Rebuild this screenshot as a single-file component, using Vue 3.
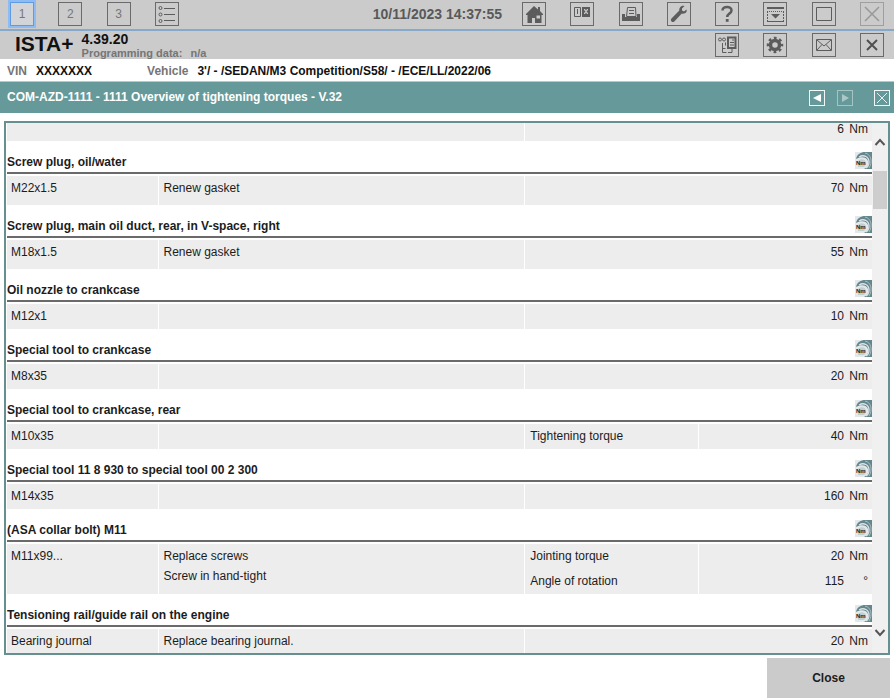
<script setup>
import { ref } from 'vue'

const activeTab = ref(1)

const topTools = ['home', 'book', 'print', 'wrench', 'help', 'dock', 'window', 'close']
const subTools = ['tree', 'gear', 'mail', 'close']
const labels = {
  home: 'Home', book: 'Manuals', print: 'Print', wrench: 'Service', help: 'Help', dock: 'Minimise',
  window: 'Window', close: 'Close', tree: 'Documents', gear: 'Settings', mail: 'Mail'
}

const sections = [
  { title: 'Screw plug, oil/water', size: 'M22x1.5', notes: ['Renew gasket'], tall: true, values: [['', '70', 'Nm']] },
  { title: 'Screw plug, main oil duct, rear, in V-space, right', size: 'M18x1.5', notes: ['Renew gasket'], tall: true, values: [['', '55', 'Nm']] },
  { title: 'Oil nozzle to crankcase', size: 'M12x1', notes: [], values: [['', '10', 'Nm']] },
  { title: 'Special tool to crankcase', size: 'M8x35', notes: [], values: [['', '20', 'Nm']] },
  { title: 'Special tool to crankcase, rear', size: 'M10x35', notes: [], values: [['Tightening torque', '40', 'Nm']] },
  { title: 'Special tool 11 8 930 to special tool 00 2 300', size: 'M14x35', notes: [], values: [['', '160', 'Nm']] },
  { title: '(ASA collar bolt) M11', size: 'M11x99...', notes: ['Replace screws', 'Screw in hand-tight'], values: [['Jointing torque', '20', 'Nm'], ['Angle of rotation', '115', '°']] },
  { title: 'Tensioning rail/guide rail on the engine', size: 'Bearing journal', notes: ['Replace bearing journal.'], tall: true, values: [['', '20', 'Nm']] }
]
</script>

<template>
  <div class="app">
    <header class="topbar">
      <nav class="icons four">
        <button v-for="n in 3" :key="n" class="tool num" :class="{ active: n === activeTab }" @click="activeTab = n">{{ n }}</button>
        <button class="tool" aria-label="List">
          <svg viewBox="0 0 22 22" class="line">
            <circle cx="4.5" cy="5" r="1.5" /><circle cx="4.5" cy="11.5" r="1.5" /><circle cx="4.5" cy="18" r="1.5" />
            <path d="M8 5.5h11M8 11.5h11M8 17.5h11" />
          </svg>
        </button>
      </nav>
      <time class="clock">10/11/2023 14:37:55</time>
      <div class="icons eight">
        <button v-for="t in topTools" :key="t" class="tool" :class="{ faded: t === 'close' }" :aria-label="labels[t]">
          <svg viewBox="0 0 22 22">
            <path v-if="t === 'home'" class="fill" fill-rule="evenodd" d="M11 3 3 11v1h1.500v8H9v-5h3v5h6.500v-8H20v-1l-3-3V4h-2v2.500zM13.500 12.500h3.500v3h-3.500z" />
            <g v-else-if="t === 'book'">
              <path class="line" d="M3.500 4.500h6v9h-6zM6.500 6v5" />
              <path class="fill" fill-rule="evenodd" d="M11 4h8v10h-8zM13 6v1l1.500 1.500L13 10v1h1l1-1.500 1 1.500h1v-1l-1.500-1.500L17 7V6h-1l-1 1.500L14 6z" />
            </g>
            <g v-else-if="t === 'print'">
              <path class="fill" d="M2 11h3v3h12v-3h3v7H2z" />
              <path class="line" d="M6.500 13.500 7.500 4.500h8l.500 9zM9 7.500h5M9 10.500h5" />
            </g>
            <path v-else-if="t === 'wrench'" class="fill" d="M18.500 6.500 16 8.500 14 7.500V5.500L16.500 3c-2.500-.8-5.500 1-5.200 4.500L3.500 15.500c-1.800 2 .8 4.700 2.800 3l7.500-8c3 .8 5.700-1.200 4.700-4z" />
            <g v-else-if="t === 'help'">
              <path class="thick" d="M6.500 7.500C6.500 2.800 15.500 2.800 15.500 7.500c0 3-4.300 3.200-4.300 6.500" />
              <path class="fill" d="M9.800 16h2.800v2.800H9.800z" />
            </g>
            <g v-else-if="t === 'dock'">
              <path class="fill" d="M3 4h17v2H3zM7 11h9l-4.500 4.500z" />
              <path class="line" d="M3.500 8v10M19.500 8v10" stroke-dasharray="2 1" />
              <path class="line" d="M3 18.500h17" /><path class="line" d="M3 8.500h17" stroke-dasharray="1 1" />
            </g>
            <path v-else-if="t === 'window'" class="line" d="M3.500 4.500h15v13h-15z" />
            <path v-else class="line x" d="m4 4 14 14M18 4 4 18" />
          </svg>
        </button>
      </div>
    </header>

    <section class="product">
      <h1>ISTA+</h1>
      <div class="version">
        <strong>4.39.20</strong>
        <p><span>Programming data:</span><span>n/a</span></p>
      </div>
      <div class="icons four">
        <button v-for="t in subTools" :key="t" class="tool" :aria-label="labels[t]">
          <svg viewBox="0 0 22 22">
            <g v-if="t === 'tree'">
              <path class="page" d="M12 3.500h7.500v10.500H12z" />
              <path class="line" d="M14 8.500h4M14 11h4M16 6h2M6.500 9v9.500h4M6.500 14.500h3M9.500 8.500v3M12 18.500h4V15" />
              <circle class="line" cx="4" cy="5.500" r="1.500" /><circle class="line" cx="8" cy="5.500" r="1.500" />
            </g>
            <g v-else-if="t === 'gear'">
              <circle cx="11" cy="11" r="4.500" fill="none" stroke="#5c5c5c" stroke-width="3.500" />
              <circle cx="11" cy="11" r="7" fill="none" stroke="#5c5c5c" stroke-width="2.500" stroke-dasharray="2.750 2.750" stroke-dashoffset="1.400" />
            </g>
            <path v-else-if="t === 'mail'" class="line" d="M3.500 5.500h15v11h-15zM4 6l7 6 7-6M4 16l5-5.500M18 16l-5-5.500" />
            <path v-else class="cross" d="m6 6 10 10M16 6 6 16" />
          </svg>
        </button>
      </div>
    </section>

    <section class="vehicle">
      <span class="key">VIN</span><strong class="vin">XXXXXXX</strong>
      <span class="key">Vehicle</span><strong>3'/ - /SEDAN/M3 Competition/S58/ - /ECE/LL/2022/06</strong>
    </section>

    <section class="titlebar">
      <h2>COM-AZD-1111 - 1111 Overview of tightening torques - V.32</h2>
      <button class="mini" aria-label="Back"><svg viewBox="0 0 14 14"><path d="M11 3v8L3 7z" /></svg></button>
      <button class="mini dim" aria-label="Forward"><svg viewBox="0 0 14 14"><path d="M4 3v8l7-4z" /></svg></button>
      <button class="mini last" aria-label="Close document"><svg viewBox="0 0 14 14"><path class="thin" d="m2 2 10 10M12 2 2 12" /></svg></button>
    </section>

    <main class="frame">
      <div class="view">
        <table>
          <colgroup><col class="c1" /><col class="c2" /><col class="c3" /><col /></colgroup>
          <tbody>
            <tr class="first"><td></td><td></td><td class="split" colspan="2"><div class="value"><span>6</span><span class="unit">Nm</span></div></td></tr>
          </tbody>
          <tbody v-for="s in sections" :key="s.title">
            <tr class="head">
              <th colspan="4" scope="rowgroup">
                <div>
                  <span>{{ s.title }}</span>
                  <svg viewBox="0 0 17 17" class="torque">
                    <path d="M0 0h17v17H0z" fill="#e3e9ea" />
                    <path d="M1 7C2 2 6 0 10 0h7v17H9c4-2 5-5 4-8-1-4-7-5-12-2z" fill="#64868d" />
                    <path d="M4 5c5-3 10 0 10 5 0 3-1 5-3 6" fill="none" stroke="#dbe5e7" stroke-width="1.300" />
                    <path d="M10 1c6 1 8 9 4 15" fill="none" stroke="#a9bec2" />
                    <path d="M3 9c3-3 8-2 8 2 0 2-1 3-2 4H3z" fill="#c3d0d3" />
                    <text x="1" y="13">Nm</text>
                  </svg>
                </div>
              </th>
            </tr>
            <tr v-for="(v, i) in s.values" :key="i" :class="{ tall: s.tall, next: i > 0 }">
              <td v-if="i === 0" :rowspan="s.values.length">{{ s.size }}</td>
              <td v-if="i === 0" :rowspan="s.values.length" class="split"><p v-for="n in s.notes" :key="n">{{ n }}</p></td>
              <td v-if="v[0]" class="split">{{ v[0] }}</td>
              <td class="split" :colspan="v[0] ? 1 : 2"><div class="value"><span>{{ v[1] }}</span><span class="unit">{{ v[2] }}</span></div></td>
            </tr>
          </tbody>
        </table>
      </div>
      <div class="scroll">
        <button aria-label="Scroll up"><svg viewBox="0 0 14 16"><path d="m2.500 11 4.500-5 4.500 5" /></svg></button>
        <div class="track"><div class="thumb"></div></div>
        <button aria-label="Scroll down"><svg viewBox="0 0 14 16"><path d="m2.500 6 4.500 5 4.500-5" /></svg></button>
      </div>
    </main>

    <footer><button class="close">Close</button></footer>
  </div>
</template>

<style>
body { margin: 0; background: #fff; }
</style>

<style scoped>
* { box-sizing: border-box; }
.app { display: flex; flex-direction: column; height: 100vh; overflow: hidden; font: 12px/16px "Liberation Sans", Arial, sans-serif; color: #1c1c1c; }
button { font: inherit; color: inherit; padding: 0; margin: 0; border: 0; background: none; cursor: pointer; }
h1, h2, p { margin: 0; }
svg { display: block; width: 100%; height: 100%; }
.topbar { display: flex; align-items: flex-start; height: 31px; padding: 2px 10px; background: #cbcbcb; border-bottom: 2px solid #86a9ca; }
.icons { display: flex; justify-content: space-between; }
.four { width: 169px; }
.eight { width: 362px; }
.tool { width: 24px; height: 24px; border: 1px solid #6a6a6a; }
.num { color: #777; }
.active { background: #d2d4d8; border-color: #5f9be0; outline: 2px solid #8dbcf5; }
.faded { opacity: .45; }
.clock { margin-left: auto; margin-right: 20px; line-height: 24px; font-size: 14px; font-weight: bold; color: #595959; }
.fill { fill: #5c5c5c; }
.line { fill: none; stroke: #5c5c5c; stroke-width: 1; }
.page { fill: none; stroke: #5c5c5c; stroke-width: 2; }
.x { stroke-width: 1.500; }
.thick { fill: none; stroke: #5c5c5c; stroke-width: 2.500; }
.cross { stroke: #505050; stroke-width: 2; }
.product { display: flex; align-items: flex-start; height: 28px; padding: 2px 10px 0 15px; background: #cbcbcb; }
.product h1 { font-size: 21px; line-height: 22px; color: #111; }
.version { margin: 0 auto 0 8px; }
.version strong { display: block; font-size: 14px; line-height: 13px; color: #111; }
.version p { display: flex; gap: 8px; font-size: 11px; line-height: 14px; font-weight: bold; color: #757575; }
.vehicle { display: flex; align-items: center; height: 23px; padding: 2px 7px 0; color: #111; border-bottom: 1px solid #a9cdd3; }
.key { margin-right: 9px; font-weight: bold; color: #757575; }
.vin { margin-right: 55px; }
.titlebar { display: flex; align-items: center; height: 31px; padding: 0 4px 0 7px; background: #669999; color: #fff; }
.titlebar h2 { flex: 1; padding-bottom: 2px; font-size: 12px; line-height: 16px; }
.mini { width: 16px; height: 16px; margin-right: 12px; border: 1px solid #f2f8f8; }
.mini svg { fill: #fff; }
.mini .thin { stroke: #e5f0f0; }
.dim { opacity: .45; margin-right: 21px; }
.last { margin-right: 0; }
.frame { display: flex; flex: 1; min-height: 0; margin: 8px 4px 3px; border: 2px solid #66908f; }
.view { flex: 1; min-width: 0; padding-left: 1px; overflow: hidden; }
table { width: 100%; table-layout: fixed; border-collapse: separate; border-spacing: 0; }
.c1 { width: 17.400%; }
.c2 { width: 42.400%; }
.c3 { width: 20.100%; }
td { height: 27px; padding: 4px 4px 0; vertical-align: top; background: #ededed; border-top: 2px solid #fff; }
.first td { height: 18px; padding: 0 4px 2px; border-top: 0; line-height: 12px; }
.tall td { height: 31px; }
.next td { height: 25px; border-top: 0; padding-top: 4px; }
.split { border-left: 1px solid #fff; padding-left: 5px; }
td p { padding-bottom: 4px; }
.value { display: flex; justify-content: flex-end; gap: 5px; }
.unit { width: 19px; text-align: right; }
th { height: 33px; padding: 0; text-align: left; vertical-align: bottom; border-bottom: 2px solid #6a6a6a; }
th div { display: flex; align-items: center; justify-content: space-between; height: 23px; }
th span { padding-top: 2px; }
.torque { width: 17px; height: 17px; }
.torque text { font: bold 6px "Liberation Sans", Arial, sans-serif; fill: #222; }
.scroll { display: flex; flex-direction: column; width: 16px; padding: 11px 1px 13px; background: #f0f0f0; }
.scroll button { height: 16px; }
.scroll path { fill: none; stroke: #555; stroke-width: 2; }
.track { flex: 1; padding-top: 21px; }
.thumb { height: 38px; background: #cdcdcd; }
footer { display: flex; justify-content: flex-end; padding: 0 4px 1px; }
.close { width: 123px; height: 40px; background: #cbcbcb; font-weight: bold; }
</style>
